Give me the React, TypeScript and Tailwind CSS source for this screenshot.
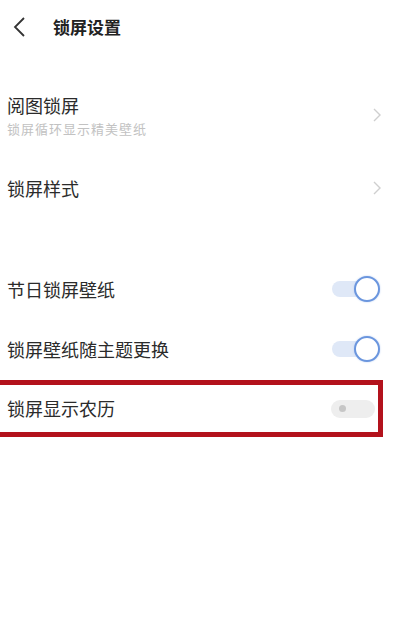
const font = { fontFamily: '"Noto Sans CJK SC", "Noto Sans", sans-serif' };

function Chevron() {
  return (
    <svg width="10" height="16" viewBox="0 0 10 16" className="mr-[18px]">
      <path d="M2 2 L8 8 L2 14" fill="none" stroke="#cfcfcf" strokeWidth="1.4" />
    </svg>
  );
}

function ToggleOn() {
  return (
    <div className="relative mr-[20px] h-[26px] w-[48px]">
      <div className="absolute left-0 top-[5px] h-[16px] w-[36px] rounded-full bg-[#dfe8f7]" />
      <div className="absolute right-0 top-0 h-[26px] w-[26px] rounded-full border-[2.5px] border-[#6b96de] bg-white shadow-[0_0_2px_#b9cdf0]" />
    </div>
  );
}

function ToggleOff() {
  return (
    <div className="mr-[3px] flex h-[18px] w-[44px] items-center rounded-full bg-[#eeeeee] pl-[8px]">
      <div className="h-[7px] w-[7px] rounded-full bg-[#c6c6c6]" />
    </div>
  );
}

export default function App() {
  return (
    <div className="h-[635px] w-[400px] overflow-hidden bg-white text-[#2b2b2b]" style={font}>
      <div className="flex h-[54px] items-center">
        <svg width="14" height="22" viewBox="0 0 14 22" className="ml-[13px]">
          <path d="M11 2 L2 11 L11 20" fill="none" stroke="#333" strokeWidth="1.8" />
        </svg>
        <span className="ml-[26px] text-[17px] font-bold text-[#222]">锁屏设置</span>
      </div>

      <div className="mt-[26px] flex h-[70px] items-center justify-between">
        <div className="ml-[7px] flex flex-col">
          <span className="text-[18px] leading-[24px]">阅图锁屏</span>
          <span className="mt-[3px] text-[13px] leading-[18px] tracking-[1px] text-[#c2c2c2]">锁屏循环显示精美壁纸</span>
        </div>
        <Chevron />
      </div>

      <div className="flex h-[76px] items-center justify-between">
        <span className="ml-[7px] text-[18px]">锁屏样式</span>
        <Chevron />
      </div>

      <div className="mt-[33px] flex h-[60px] items-center justify-between">
        <span className="ml-[7px] text-[18px]">节日锁屏壁纸</span>
        <ToggleOn />
      </div>

      <div className="flex h-[60px] items-center justify-between">
        <span className="ml-[7px] text-[18px]">锁屏壁纸随主题更换</span>
        <ToggleOn />
      </div>

      <div className="mt-px flex h-[57px] w-[383px] items-center justify-between border-y-[5px] border-r-[5px] border-[#b3121c]">
        <span className="ml-[7px] text-[18px]">锁屏显示农历</span>
        <ToggleOff />
      </div>
    </div>
  );
}
